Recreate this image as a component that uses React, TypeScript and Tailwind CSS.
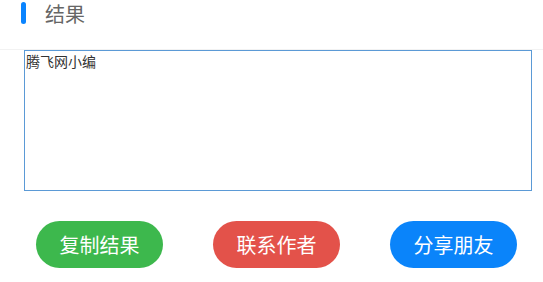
export default function App() {
    return (
        <div className="w-[543px] h-[282px] bg-white overflow-hidden" style={{ fontFamily: '"Noto Sans CJK SC", "Noto Sans", sans-serif' }}>
            {/* Header */}
            <div className="h-[50px] flex items-start border-b border-[#f2f2f2]">
                <div className="ml-[21px] mt-[2px] w-[5px] h-[22px] rounded-full bg-[#0a84ff]" />
                <h2 className="ml-[19px] mt-[2px] text-[20px] leading-[24px] text-[#666]">结果</h2>
            </div>

            {/* Result box */}
            <textarea
                readOnly
                defaultValue="腾飞网小编"
                className="block ml-6 w-[508px] h-[141px] border border-[#5b9ad6] px-px py-0 text-[14px] leading-[20px] text-[#333] resize-none outline-none"
            />

            {/* Actions */}
            <div className="flex pl-[36px] gap-[50px] mt-[30px]">
                <button className="w-[127px] h-[47px] rounded-full bg-[#3db84d] text-white text-[20px]">复制结果</button>
                <button className="w-[127px] h-[47px] rounded-full bg-[#e3524a] text-white text-[20px]">联系作者</button>
                <button className="w-[127px] h-[47px] rounded-full bg-[#0a84fa] text-white text-[20px]">分享朋友</button>
            </div>
        </div>
    )
}
